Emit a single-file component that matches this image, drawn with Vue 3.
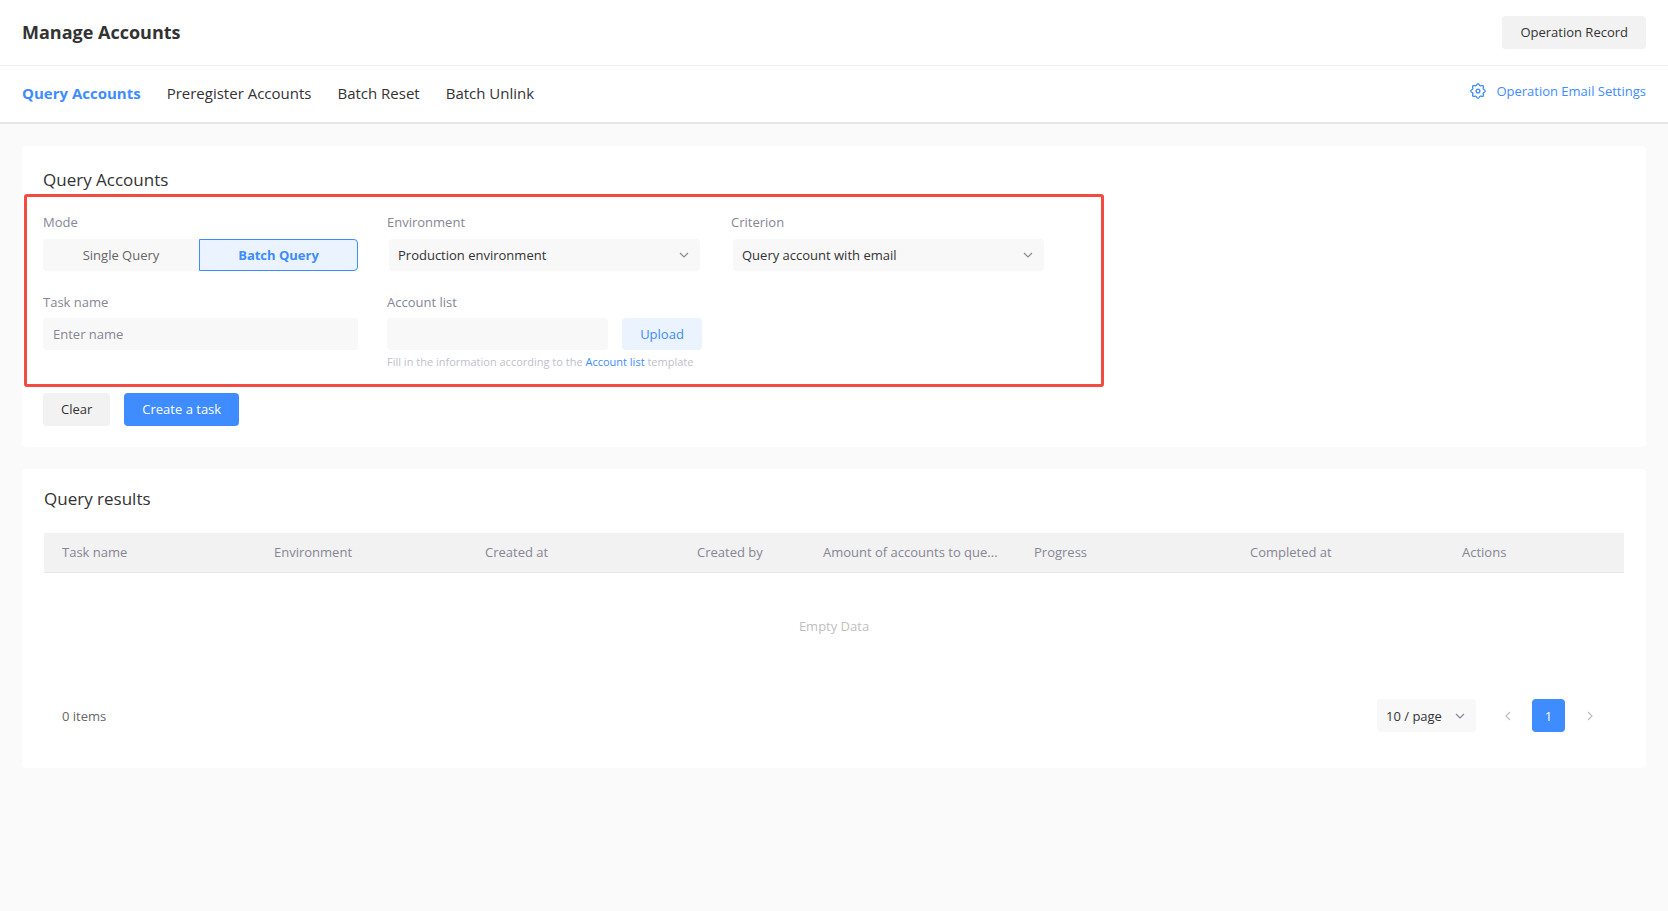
<script setup>
import { ref } from 'vue'

const tabs = ['Query Accounts', 'Preregister Accounts', 'Batch Reset', 'Batch Unlink']
const activeTab = ref('Query Accounts')
const modes = ['Single Query', 'Batch Query']
const mode = ref('Batch Query')
const taskName = ref('')
const fileName = ref('')
const columns = [
  { title: 'Task name', width: 212 },
  { title: 'Environment', width: 211 },
  { title: 'Created at', width: 212 },
  { title: 'Created by', width: 126 },
  { title: 'Amount of accounts to que...', width: 211 },
  { title: 'Progress', width: 216 },
  { title: 'Completed at', width: 212 },
  { title: 'Actions', width: 180 },
]
const total = columns.reduce((sum, c) => sum + c.width, 0)

// Gear outline: a circle with eight rounded teeth
const gear = Array.from({ length: 96 }, (_, i) => {
  const a = (i / 96) * Math.PI * 2
  const r = 6.4 + 0.8 * Math.cos(8 * a)
  return `${(8 + r * Math.cos(a)).toFixed(2)},${(8 + r * Math.sin(a)).toFixed(2)}`
}).join(' ')

function clearForm() {
  taskName.value = ''
  fileName.value = ''
}
</script>

<template>
  <div class="page">
    <header class="topbar">
      <h1>Manage Accounts</h1>
      <button type="button" class="btn">Operation Record</button>
    </header>

    <nav class="tabbar">
      <div class="tabs">
        <button
          v-for="t in tabs"
          :key="t"
          type="button"
          class="tab"
          :class="{ active: t === activeTab }"
          @click="activeTab = t"
        >{{ t }}</button>
      </div>
      <a href="#" class="settings">
        <svg width="16" height="16" viewBox="0 0 16 16" fill="none" stroke="currentColor" stroke-width="1.3" stroke-linejoin="round" aria-hidden="true">
          <polygon :points="gear" />
          <circle cx="8" cy="8" r="1.9" />
        </svg>
        <span>Operation Email Settings</span>
      </a>
    </nav>

    <main class="content">
      <section class="card query">
        <h2>Query Accounts</h2>
        <form @submit.prevent>
          <div class="fields">
            <div class="field" role="group" aria-labelledby="mode-label">
              <span id="mode-label" class="label">Mode</span>
              <div class="segments">
                <button
                  v-for="m in modes"
                  :key="m"
                  type="button"
                  class="segment"
                  :class="{ active: m === mode }"
                  :aria-pressed="m === mode"
                  @click="mode = m"
                >{{ m }}</button>
              </div>
            </div>
            <div class="field">
              <label class="label" for="environment">Environment</label>
              <div class="select wide">
                <select id="environment"><option>Production environment</option></select>
                <svg class="chevron" width="10" height="6" viewBox="0 0 10 6" aria-hidden="true"><path d="M1 1l4 4 4-4" /></svg>
              </div>
            </div>
            <div class="field">
              <label class="label" for="criterion">Criterion</label>
              <div class="select wide">
                <select id="criterion"><option>Query account with email</option></select>
                <svg class="chevron" width="10" height="6" viewBox="0 0 10 6" aria-hidden="true"><path d="M1 1l4 4 4-4" /></svg>
              </div>
            </div>
            <div class="field">
              <label class="label" for="task-name">Task name</label>
              <input id="task-name" v-model="taskName" type="text" class="input" placeholder="Enter name" />
            </div>
            <div class="field">
              <label class="label" for="account-list">Account list</label>
              <div class="upload-row">
                <input id="account-list" v-model="fileName" type="text" class="input" readonly />
                <button type="button" class="upload">Upload</button>
              </div>
              <p class="hint">Fill in the information according to the <a href="#">Account list</a> template</p>
            </div>
          </div>
          <div class="actions">
            <button type="button" class="btn" @click="clearForm">Clear</button>
            <button type="submit" class="btn primary">Create a task</button>
          </div>
        </form>
      </section>

      <section class="card results">
        <h2>Query results</h2>
        <table>
          <colgroup>
            <col v-for="c in columns" :key="c.title" :style="{ width: (c.width / total) * 100 + '%' }" />
          </colgroup>
          <thead>
            <tr><th v-for="c in columns" :key="c.title" scope="col">{{ c.title }}</th></tr>
          </thead>
          <tbody>
            <tr><td :colspan="columns.length" class="empty">Empty Data</td></tr>
          </tbody>
        </table>
        <footer class="pager">
          <span class="count">0 items</span>
          <div class="select">
            <select aria-label="Items per page"><option>10 / page</option></select>
            <svg class="chevron" width="10" height="6" viewBox="0 0 10 6" aria-hidden="true"><path d="M1 1l4 4 4-4" /></svg>
          </div>
          <div class="pages">
            <button type="button" class="arrow" aria-label="Previous page">
              <svg class="chevron" width="6" height="10" viewBox="0 0 6 10" aria-hidden="true"><path d="M5 1L1 5l4 4" /></svg>
            </button>
            <button type="button" class="current">1</button>
            <button type="button" class="arrow" aria-label="Next page">
              <svg class="chevron" width="6" height="10" viewBox="0 0 6 10" aria-hidden="true"><path d="M1 1l4 4-4 4" /></svg>
            </button>
          </div>
        </footer>
      </section>
    </main>
  </div>
</template>

<style>
body {
  margin: 0;
  background: #fafafa;
}
</style>

<style scoped>
.page {
  background: #fafafa;
  color: #333;
  font-family: "Open Sans", "Noto Sans", sans-serif;
  font-size: 13px;
  line-height: 22px;
}
.page * {
  box-sizing: border-box;
}
button,
input,
select {
  margin: 0;
  border: 0;
  border-radius: 4px;
  font: inherit;
  color: inherit;
}
button {
  padding: 0;
  cursor: pointer;
}
a {
  color: #3e8cff;
  text-decoration: none;
}
h1,
h2,
p {
  margin: 0;
}
h1 {
  padding-bottom: 2px;
  font-size: 18px;
  font-weight: 700;
}
h2 {
  font-size: 17px;
  line-height: 24px;
  font-weight: 400;
}
.topbar {
  display: flex;
  align-items: center;
  justify-content: space-between;
  height: 66px;
  padding: 0 22px;
  background: #fff;
  border-bottom: 1px solid #f0f0f0;
}
.tabbar {
  display: flex;
  align-items: center;
  justify-content: space-between;
  height: 58px;
  padding: 0 22px;
  background: #fff;
  border-bottom: 2px solid #e6e6e6;
}
.tabs {
  display: flex;
  gap: 26px;
  padding-bottom: 2px;
}
.tab {
  background: none;
  font-size: 15px;
}
.tab.active {
  color: #3e8cff;
  font-weight: 700;
}
.settings {
  display: flex;
  align-items: center;
  gap: 10px;
  padding-bottom: 6px;
}
.btn {
  height: 33px;
  padding: 0 18px 2px;
  background: #f2f2f2;
}
.btn.primary {
  background: #3e8cff;
  color: #fff;
}
.content {
  display: flex;
  flex-direction: column;
  gap: 22px;
  padding: 22px;
}
.card {
  background: #fff;
  border-radius: 4px;
}
.query {
  padding: 22px 2px 21px;
}
.query h2 {
  padding: 0 19px;
}
.fields {
  display: grid;
  grid-template-columns: repeat(3, minmax(0, 315px));
  gap: 20px 29px;
  max-width: 1080px;
  margin-top: 2px;
  padding: 14px 16px 12px;
  border: 3px solid #f34b42;
  border-radius: 3px;
}
.label {
  display: block;
  margin-bottom: 6px;
  color: #868694;
}
.field:nth-child(n + 4) .label {
  margin-bottom: 5px;
}
.segments {
  display: grid;
  grid-template-columns: 156fr 159fr;
  height: 32px;
}
.segment {
  background: #f8f8f8;
  border-radius: 4px 0 0 4px;
  color: #666;
}
.segment + .segment {
  border-radius: 0 4px 4px 0;
}
.segment.active {
  background: #ebf3ff;
  border: 1px solid #3e8cff;
  color: #3e8cff;
  font-weight: 700;
}
.input {
  display: block;
  width: 100%;
  height: 32px;
  padding: 0 10px;
  background: #f8f8f8;
}
.input::placeholder {
  color: #868694;
}
.select {
  display: grid;
  align-items: center;
}
.select.wide {
  margin: 0 2px;
}
.select > * {
  grid-area: 1 / 1;
}
select {
  appearance: none;
  width: 100%;
  height: 32px;
  padding: 0 32px 0 9px;
  background: #f8f8f8;
}
.select .chevron {
  justify-self: end;
  margin-right: 11px;
  pointer-events: none;
}
.chevron {
  fill: none;
  stroke: #868694;
  stroke-width: 1.2;
}
.upload-row {
  display: flex;
  gap: 14px;
}
.upload {
  flex: 0 0 80px;
  background: #ebf3ff;
  color: #3e8cff;
}
.hint {
  margin-top: 2px;
  font-size: 11px;
  line-height: 20px;
  color: #c0c0cb;
  white-space: nowrap;
}
.actions {
  display: flex;
  gap: 14px;
  padding: 6px 19px 0;
}
.results {
  padding: 18px 22px 36px;
}
table {
  width: 100%;
  margin-top: 22px;
  table-layout: fixed;
  border-collapse: separate;
  border-spacing: 0;
}
th {
  height: 40px;
  padding: 0 16px 2px 18px;
  overflow: hidden;
  background: #f2f2f2;
  border-bottom: 1px solid #e6e6e6;
  color: #868694;
  font-weight: 400;
  text-align: left;
  text-overflow: ellipsis;
  white-space: nowrap;
}
.empty {
  height: 108px;
  padding: 0 0 2px;
  color: #bfbfbf;
  text-align: center;
}
.pager {
  display: flex;
  align-items: center;
  margin-top: 18px;
  padding: 0 18px;
}
.count {
  margin-right: auto;
  color: #666;
}
.pager .select {
  width: 99px;
}
.pager select {
  height: 33px;
}
.pages {
  display: flex;
  gap: 8px;
  margin-left: 15px;
}
.arrow,
.current {
  display: grid;
  place-items: center;
  width: 33px;
  height: 33px;
}
.arrow {
  background: none;
}
.arrow .chevron {
  stroke: #bfbfbf;
}
.current {
  background: #3e8cff;
  color: #fff;
}
</style>
